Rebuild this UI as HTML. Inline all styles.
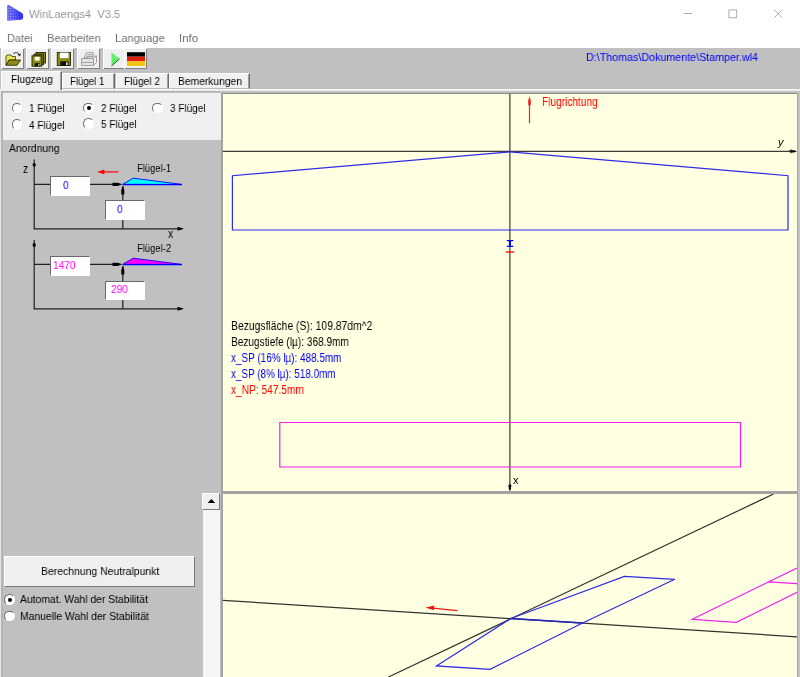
<!DOCTYPE html>
<html lang="de">
<head>
<meta charset="utf-8">
<title>WinLaengs4 V3.5</title>
<style>
html,body{margin:0;padding:0;}
body{width:800px;height:677px;overflow:hidden;background:#c0c0c0;position:relative;font-family:"Liberation Sans",sans-serif;font-size:12px;color:#000;}
.abs{position:absolute;}
.t{position:absolute;white-space:nowrap;line-height:14px;font-size:12.2px;transform-origin:0 0;will-change:transform;}
#titlebar{left:0;top:0;width:800px;height:30px;background:#fff;}
#menubar{left:0;top:30px;width:800px;height:18px;background:#fff;}
.title{color:#969696;font-size:11.5px;}
.u{font-size:11.5px;}
.menu{color:#707070;font-size:11.5px;}
.tb{position:absolute;top:48px;height:21px;width:23px;background:#f0f0f0;box-shadow:inset 1px 1px 0 #fff, inset -1px -1px 0 #808080;}
.tab{position:absolute;top:72.6px;height:16.8px;background:#f0f0f0;border-bottom:1px solid #bdbdbd;border-top:1px solid #fff;border-left:1px solid #fff;border-right:1px solid #696969;box-sizing:border-box;box-shadow:inset -1px 0 0 #a0a0a0;}
.tab.sel{top:70.5px;height:19.5px;z-index:2;border-bottom:none;}
.inp{position:absolute;background:#fff;height:19.5px;width:39.6px;box-sizing:border-box;border:1.5px solid;border-color:#696969 #fff #fff #696969;}
.radio{position:absolute;width:10.6px;height:10.6px;border-radius:50%;background:#fff;box-sizing:border-box;border:1.3px solid;border-color:#6c6c6c #fff #fff #6c6c6c;transform:rotate(0deg);}
.radio.on::after{content:"";position:absolute;left:2.6px;top:2.5px;width:4px;height:4px;background:#000;border-radius:50%;}
</style>
</head>
<body>
<!-- title bar -->
<div id="titlebar" class="abs"></div>
<div id="menubar" class="abs"></div>
<svg class="abs" style="left:0;top:0" width="30" height="26" viewBox="0 0 30 26">
  <defs><clipPath id="wc"><path d="M7.300 5.300L8.800 5L22.300 13.300Q23.100 14 23.100 15V18Q23 19.500 21 19.800L7.300 20.800Z"/></clipPath>
  <linearGradient id="lite" x1="0" x2="1" y1="0" y2="0"><stop offset="0" stop-color="#fff" stop-opacity="0.15"/><stop offset="0.800" stop-color="#fff" stop-opacity="0"/></linearGradient></defs>
  <path d="M7.300 5.300L8.800 5L22.300 13.300Q23.100 14 23.100 15V18Q23 19.500 21 19.800L7.300 20.800Z" fill="#3434f2"/>
  <path d="M7.300 5.300L8.800 5L22.300 13.300Q23.100 14 23.100 15V18Q23 19.500 21 19.800L7.300 20.800Z" fill="url(#lite)"/>
  <g clip-path="url(#wc)" fill="#fff"><rect x="8.5" y="6.5" width="0.800" height="0.800" fill-opacity="0.80"/><rect x="8.5" y="8.1" width="0.800" height="0.800" fill-opacity="0.80"/><rect x="8.5" y="9.7" width="0.800" height="0.800" fill-opacity="0.80"/><rect x="8.5" y="11.3" width="0.800" height="0.800" fill-opacity="0.80"/><rect x="8.5" y="12.9" width="0.800" height="0.800" fill-opacity="0.80"/><rect x="8.5" y="14.5" width="0.800" height="0.800" fill-opacity="0.80"/><rect x="8.5" y="16.1" width="0.800" height="0.800" fill-opacity="0.80"/><rect x="8.5" y="17.7" width="0.800" height="0.800" fill-opacity="0.80"/><rect x="8.5" y="19.3" width="0.800" height="0.800" fill-opacity="0.80"/><rect x="10.1" y="6.5" width="0.800" height="0.800" fill-opacity="0.70"/><rect x="10.1" y="8.1" width="0.800" height="0.800" fill-opacity="0.70"/><rect x="10.1" y="9.7" width="0.800" height="0.800" fill-opacity="0.70"/><rect x="10.1" y="11.3" width="0.800" height="0.800" fill-opacity="0.70"/><rect x="10.1" y="12.9" width="0.800" height="0.800" fill-opacity="0.70"/><rect x="10.1" y="14.5" width="0.800" height="0.800" fill-opacity="0.70"/><rect x="10.1" y="16.1" width="0.800" height="0.800" fill-opacity="0.70"/><rect x="10.1" y="17.7" width="0.800" height="0.800" fill-opacity="0.70"/><rect x="10.1" y="19.3" width="0.800" height="0.800" fill-opacity="0.70"/><rect x="11.7" y="6.5" width="0.800" height="0.800" fill-opacity="0.60"/><rect x="11.7" y="8.1" width="0.800" height="0.800" fill-opacity="0.60"/><rect x="11.7" y="9.7" width="0.800" height="0.800" fill-opacity="0.60"/><rect x="11.7" y="11.3" width="0.800" height="0.800" fill-opacity="0.60"/><rect x="11.7" y="12.9" width="0.800" height="0.800" fill-opacity="0.60"/><rect x="11.7" y="14.5" width="0.800" height="0.800" fill-opacity="0.60"/><rect x="11.7" y="16.1" width="0.800" height="0.800" fill-opacity="0.60"/><rect x="11.7" y="17.7" width="0.800" height="0.800" fill-opacity="0.60"/><rect x="11.7" y="19.3" width="0.800" height="0.800" fill-opacity="0.60"/><rect x="13.3" y="6.5" width="0.800" height="0.800" fill-opacity="0.50"/><rect x="13.3" y="8.1" width="0.800" height="0.800" fill-opacity="0.50"/><rect x="13.3" y="9.7" width="0.800" height="0.800" fill-opacity="0.50"/><rect x="13.3" y="11.3" width="0.800" height="0.800" fill-opacity="0.50"/><rect x="13.3" y="12.9" width="0.800" height="0.800" fill-opacity="0.50"/><rect x="13.3" y="14.5" width="0.800" height="0.800" fill-opacity="0.50"/><rect x="13.3" y="16.1" width="0.800" height="0.800" fill-opacity="0.50"/><rect x="13.3" y="17.7" width="0.800" height="0.800" fill-opacity="0.50"/><rect x="13.3" y="19.3" width="0.800" height="0.800" fill-opacity="0.50"/><rect x="14.9" y="6.5" width="0.800" height="0.800" fill-opacity="0.40"/><rect x="14.9" y="8.1" width="0.800" height="0.800" fill-opacity="0.40"/><rect x="14.9" y="9.7" width="0.800" height="0.800" fill-opacity="0.40"/><rect x="14.9" y="11.3" width="0.800" height="0.800" fill-opacity="0.40"/><rect x="14.9" y="12.9" width="0.800" height="0.800" fill-opacity="0.40"/><rect x="14.9" y="14.5" width="0.800" height="0.800" fill-opacity="0.40"/><rect x="14.9" y="16.1" width="0.800" height="0.800" fill-opacity="0.40"/><rect x="14.9" y="17.7" width="0.800" height="0.800" fill-opacity="0.40"/><rect x="14.9" y="19.3" width="0.800" height="0.800" fill-opacity="0.40"/><rect x="16.5" y="6.5" width="0.800" height="0.800" fill-opacity="0.30"/><rect x="16.5" y="8.1" width="0.800" height="0.800" fill-opacity="0.30"/><rect x="16.5" y="9.7" width="0.800" height="0.800" fill-opacity="0.30"/><rect x="16.5" y="11.3" width="0.800" height="0.800" fill-opacity="0.30"/><rect x="16.5" y="12.9" width="0.800" height="0.800" fill-opacity="0.30"/><rect x="16.5" y="14.5" width="0.800" height="0.800" fill-opacity="0.30"/><rect x="16.5" y="16.1" width="0.800" height="0.800" fill-opacity="0.30"/><rect x="16.5" y="17.7" width="0.800" height="0.800" fill-opacity="0.30"/><rect x="16.5" y="19.3" width="0.800" height="0.800" fill-opacity="0.30"/><rect x="18.1" y="6.5" width="0.800" height="0.800" fill-opacity="0.20"/><rect x="18.1" y="8.1" width="0.800" height="0.800" fill-opacity="0.20"/><rect x="18.1" y="9.7" width="0.800" height="0.800" fill-opacity="0.20"/><rect x="18.1" y="11.3" width="0.800" height="0.800" fill-opacity="0.20"/><rect x="18.1" y="12.9" width="0.800" height="0.800" fill-opacity="0.20"/><rect x="18.1" y="14.5" width="0.800" height="0.800" fill-opacity="0.20"/><rect x="18.1" y="16.1" width="0.800" height="0.800" fill-opacity="0.20"/><rect x="18.1" y="17.7" width="0.800" height="0.800" fill-opacity="0.20"/><rect x="18.1" y="19.3" width="0.800" height="0.800" fill-opacity="0.20"/><rect x="19.7" y="6.5" width="0.800" height="0.800" fill-opacity="0.10"/><rect x="19.7" y="8.1" width="0.800" height="0.800" fill-opacity="0.10"/><rect x="19.7" y="9.7" width="0.800" height="0.800" fill-opacity="0.10"/><rect x="19.7" y="11.3" width="0.800" height="0.800" fill-opacity="0.10"/><rect x="19.7" y="12.9" width="0.800" height="0.800" fill-opacity="0.10"/><rect x="19.7" y="14.5" width="0.800" height="0.800" fill-opacity="0.10"/><rect x="19.7" y="16.1" width="0.800" height="0.800" fill-opacity="0.10"/><rect x="19.7" y="17.7" width="0.800" height="0.800" fill-opacity="0.10"/><rect x="19.7" y="19.3" width="0.800" height="0.800" fill-opacity="0.10"/></g>
</svg>
<div class="t title" style="left:29.4px;top:6.8px;transform:scaleX(.971)">WinLaengs4&nbsp; V3.5</div>
<svg class="abs" style="left:670px;top:0" width="130" height="30" viewBox="670 0 130 30">
  <g stroke="#a4a4a4" stroke-width="0.9" fill="none">
    <path d="M683.600 13.500H692"/>
    <rect x="728.900" y="9.900" width="7.800" height="7.800"/>
    <path d="M774.200 9.700L782.200 17.800M782.200 9.700L774.200 17.800"/>
  </g>
</svg>
<div class="t menu" style="left:6.5px;top:30.8px;transform:scaleX(.948)">Datei</div>
<div class="t menu" style="left:46.7px;top:30.8px;transform:scaleX(.968)">Bearbeiten</div>
<div class="t menu" style="left:115px;top:30.8px;transform:scaleX(.973)">Language</div>
<div class="t menu" style="left:179.3px;top:30.8px;">Info</div>

<!-- toolbar -->
<div class="tb" style="left:1px"></div>
<div class="tb" style="left:26px"></div>
<div class="tb" style="left:51px"></div>
<div class="tb" style="left:76.500px"></div>
<div class="tb" style="left:102.500px;width:21px;box-shadow:inset 1px 1px 0 #fff, inset 0 -1px 0 #808080"></div>
<div class="tb" style="left:123.500px;width:23.500px"></div>
<svg class="abs" style="left:0;top:48px" width="150" height="22" viewBox="0 48 150 22">
  <!-- open folder -->
  <g>
    <path d="M6 65V56L7 55H11L12 56.500H15.500V60H9Z" fill="#e6e650" stroke="#303000" stroke-width="0.8"/>
    <path d="M6 65.300L9.300 60H20.700L17 65.300Z" fill="#8c8c10" stroke="#202000" stroke-width="0.8"/>
    <path d="M13.200 54C15 51.800 18.300 52 19.500 55.200" fill="none" stroke="#202020" stroke-width="1"/>
    <path d="M17.500 54.500L20 56.500L20.800 53.500Z" fill="#202020"/>
  </g>
  <!-- save all -->
  <g stroke="#202000" stroke-width="0.9">
    <rect x="36" y="52.500" width="9.500" height="10.500" fill="#8c8c10"/>
    <rect x="34" y="54.200" width="9.500" height="10.500" fill="#8c8c10"/>
    <rect x="32" y="55.800" width="9.800" height="10.400" fill="#8c8c10"/>
  </g>
  <rect x="34.800" y="56.800" width="4.800" height="3.800" fill="#fff"/>
  <rect x="34.800" y="63.200" width="5.200" height="3.200" fill="#101010"/>
  <rect x="38.300" y="63.800" width="1.200" height="2.200" fill="#d0d0d0"/>
  <!-- save -->
  <rect x="57.300" y="52.500" width="13.200" height="13" fill="#8c8c10" stroke="#202000" stroke-width="0.9"/>
  <rect x="60" y="52.600" width="8.500" height="5.500" fill="#fff"/>
  <rect x="60.300" y="61.300" width="8.200" height="4.300" fill="#101010"/>
  <rect x="66" y="62.300" width="1.600" height="2.800" fill="#e0e0e0"/>
  <!-- print disabled -->
  <g fill="none" stroke="#a0a0a0" stroke-width="1">
    <path d="M84 58L86.500 52.700H93.500L92 58" fill="#f4f4f4"/>
    <path d="M87 54.700H92M86.300 56.300H91.300"/>
    <path d="M81.500 58.500H93.500V65.500H81.500Z" fill="#e4e4e4"/>
    <path d="M93.500 58.500L96.500 56V62.500L93.500 65.500"/>
    <path d="M84 58L93 56.300L96.500 56"/>
    <path d="M82 62.500H93"/>
  </g>
  <!-- play -->
  <path d="M111.500 52.200L119.600 58.800L111.500 66Z" fill="#66f070"/>
  <path d="M111.500 66L119.600 58.800" stroke="#2a5a2a" stroke-width="1" fill="none"/>
  <!-- flag -->
  <rect x="127" y="52.200" width="18" height="4.500" fill="#000"/>
  <rect x="127" y="56.700" width="18" height="4.500" fill="#e0200c"/>
  <rect x="127" y="61.200" width="18" height="4.800" fill="#f2c414"/>
</svg>
<div class="t u" style="left:585.7px;top:50px;color:#0000ff;transform:scaleX(0.931)">D:\Thomas\Dokumente\Stamper.wl4</div>

<!-- tabs -->
<div class="abs" style="left:0;top:89px;width:800px;height:2.4px;background:#ececec;border-top:0.8px solid #f6f6f6;box-sizing:border-box"></div>
<div class="abs" style="left:0;top:91.300px;width:221px;height:1.200px;background:#b4b4b4"></div>
<div class="tab sel" style="left:1px;width:61px"></div>
<div class="tab" style="left:62px;width:53px"></div>
<div class="tab" style="left:115.500px;width:53px"></div>
<div class="tab" style="left:169px;width:81px"></div>
<div class="t u" style="left:10.6px;top:72px;z-index:3;transform:scaleX(0.882)">Flugzeug</div>
<div class="t u" style="left:70.2px;top:74.2px;z-index:3;transform:scaleX(0.84)">Flügel 1</div>
<div class="t u" style="left:123.6px;top:74.2px;z-index:3;transform:scaleX(0.88)">Flügel 2</div>
<div class="t u" style="left:177.6px;top:74.2px;z-index:3;transform:scaleX(0.894)">Bemerkungen</div>

<!-- left panel -->
<div class="abs" style="left:0;top:91px;width:1.2px;height:586px;background:#e6e6e6"></div>
<div class="abs" style="left:1.2px;top:91.300px;width:1.600px;height:586px;background:#b4b4b4"></div>
<div class="abs" style="left:2.800px;top:92.500px;width:218.200px;height:47.300px;background:#f0f0f0"></div>
<div class="radio" style="left:11.9px;top:102.9px"></div>
<div class="radio on" style="left:83.1px;top:102.9px"></div>
<div class="radio" style="left:152.4px;top:102.9px"></div>
<div class="radio" style="left:11.9px;top:119.3px"></div>
<div class="radio" style="left:83.1px;top:118.2px"></div>
<div class="t u" style="left:29.4px;top:101.2px;transform:scaleX(0.868)">1 Flügel</div>
<div class="t u" style="left:100.6px;top:101px;transform:scaleX(0.868)">2 Flügel</div>
<div class="t u" style="left:170px;top:101px;transform:scaleX(0.868)">3 Flügel</div>
<div class="t u" style="left:29.4px;top:118px;transform:scaleX(0.868)">4 Flügel</div>
<div class="t u" style="left:100.6px;top:117.2px;transform:scaleX(0.868)">5 Flügel</div>
<div class="t u" style="left:9.3px;top:141.4px;transform:scaleX(0.9)">Anordnung</div>

<svg class="abs" style="left:0;top:140px" width="221" height="180" viewBox="0 140 221 180">
  <g stroke="#202020" stroke-width="1.2" fill="none">
    <path d="M34.200 159.500V228.800H182"/>
    <path d="M34.200 184.300H51M90 184.300H120"/>
    <path d="M122.800 186V200M122.800 219V228.800"/>
    <path d="M34.200 240V308.800H182"/>
    <path d="M34.200 264.300H51M90 264.300H120"/>
    <path d="M122.800 266V281M122.800 299V308.800"/>
  </g>
  <g fill="#000">
    <ellipse cx="34.200" cy="164.800" rx="1.600" ry="1.900"/><ellipse cx="34.200" cy="245" rx="1.600" ry="1.900"/>
    <path d="M177.500 226.800L184 228.800L177.500 230.800Z"/><path d="M177.500 306.800L184 308.800L177.500 310.800Z"/>
    <path d="M112.500 182.700H117.500L122.500 184.300L117.500 185.900H112.500Z"/><path d="M112.500 262.700H117.500L122.500 264.300L117.500 265.900H112.500Z"/>
    <path d="M121.300 194.400V190L122.800 185.500L124.300 190V194.400Z"/><path d="M121.300 274.400V270L122.800 265.500L124.300 270V274.400Z"/>
  </g>
  <path d="M122.800 184.300L133.200 178.200L181.900 184.400Z" fill="#00ffff" stroke="#0000ff" stroke-width="0.9"/>
  <path d="M122.800 184.600H181.900" stroke="#0000ff" stroke-width="1.2"/>
  <path d="M122.800 264.300L133.200 258.200L181.900 264.400Z" fill="#ff00ff" stroke="#0000ff" stroke-width="0.9"/>
  <path d="M122.800 264.600H181.900" stroke="#0000ff" stroke-width="1.200"/>
  <path d="M100 171.900H118.500" stroke="#ff0000" stroke-width="1.2"/><path d="M96.900 171.900L104.400 169.600V174.200Z" fill="#ff0000"/>
</svg>
<div class="t" style="left:22.8px;top:161.6px;font-size:12.7px;transform:scaleX(.8)">z</div>
<div class="t" style="left:168px;top:226.800px;font-size:12.2px;transform:scaleX(.85)">x</div>
<div class="t u" style="left:137px;top:160.9px;transform:scaleX(0.82)">Flügel-1</div>
<div class="t u" style="left:137px;top:240.9px;transform:scaleX(0.82)">Flügel-2</div>
<div class="inp" style="left:50.4px;top:176px"></div>
<div class="inp" style="left:105px;top:200px"></div>
<div class="inp" style="left:50.4px;top:256px"></div>
<div class="inp" style="left:105px;top:280.500px"></div>
<div class="t u" style="left:62.6px;top:177.6px;color:#0000ff;transform:scaleX(.875)">0</div>
<div class="t u" style="left:117px;top:201.8px;color:#0000ff;transform:scaleX(.875)">0</div>
<div class="t u" style="left:52.7px;top:257.6px;color:#ff00ff;transform:scaleX(.875)">1470</div>
<div class="t u" style="left:111.4px;top:282.3px;color:#ff00ff;transform:scaleX(.875)">290</div>

<!-- button -->
<div class="abs" style="left:3.800px;top:555.500px;width:190.800px;height:31.500px;background:#efefef;box-sizing:border-box;border:1.200px solid;border-color:#fff #7a7a7a #7a7a7a #fff;"></div>
<div class="t u" style="left:41.2px;top:564px;transform:scaleX(0.907)">Berechnung Neutralpunkt</div>
<div class="radio on" style="left:4.2px;top:594.2px"></div>
<div class="radio" style="left:4.2px;top:610.9px"></div>
<div class="t u" style="left:20px;top:592.3px;transform:scaleX(0.9)">Automat. Wahl der Stabilität</div>
<div class="t u" style="left:20px;top:608.6px;transform:scaleX(0.903)">Manuelle Wahl der Stabilität</div>

<!-- scrollbar -->
<div class="abs" style="left:202.500px;top:492.500px;width:17.200px;height:185px;background:#f6f6f6"></div>
<div class="abs" style="left:202.300px;top:492.500px;width:17.500px;height:17px;background:#f0f0f0;box-sizing:border-box;border:1.200px solid;border-color:#fff #7c7c7c #7c7c7c #fff"></div>
<svg class="abs" style="left:202px;top:492px" width="18" height="18" viewBox="202 492 18 18"><path d="M207.600 503L211.400 498.900L215.200 503Z" fill="#000"/></svg>

<!-- right panel -->
<div class="abs" style="left:221px;top:92.500px;width:579px;height:584.500px;background:#a4a4a2"></div>
<div class="abs" style="left:798px;top:91.300px;width:2px;height:586px;background:#c4c4c8"></div>
<div class="abs" style="left:221px;top:92.500px;width:576px;height:1.500px;background:#8a8a82"></div>
<div class="abs" style="left:221.200px;top:92.500px;width:1.600px;height:399px;background:#a2a298"></div>
<div class="abs" style="left:222.800px;top:94px;width:574px;height:397.300px;background:#ffffe1"></div>
<div class="abs" style="left:222.800px;top:494px;width:574px;height:183px;background:#ffffe1"></div>
<svg class="abs" style="left:222px;top:93px" width="576" height="399" viewBox="222 93 576 399">
  <g fill="none" stroke-width="1.2">
    <path d="M222.800 151.300H796" stroke="#3c3c36"/>
    <path d="M509.900 94V490" stroke="#3c3c36"/>
    <path d="M788.500 151.300L792 149.600M788.500 151.300L792 153" stroke="#3c3c36" stroke-width="0.8"/>
    <path d="M790.500 150.200H794L796.800 151.300L794 152.400H790.500Z" fill="#000" stroke="none"/>
    <path d="M509.900 483.500L508 486.500M509.900 483.500L511.800 486.500" stroke="#3c3c36" stroke-width="0.8"/>
    <path d="M508.800 485V488.500L509.900 491.300L511 488.500V485Z" fill="#000" stroke="none"/>
    <path d="M509.900 151.800L788 175.700V230H232.400V175.700Z" stroke="#2c2ce6"/>
    <path d="M279.800 422.500H740.500V467H279.800Z" stroke="#f020f0"/>
    <path d="M529.500 98V123.300" stroke="#f02020"/><path d="M528.200 105.300V101L529.500 96.200L530.800 101V105.300Z" fill="#f02020"/>
    <path d="M506.800 240.600H513.300M506.800 246.400H513.300" stroke="#0000ff" stroke-width="1.4"/><path d="M509.900 240V247" stroke="#0000ff" stroke-width="2"/>
    <path d="M505.700 252H514.200" stroke="#f01010" stroke-width="1.4"/>
  </g>
</svg>
<div class="t" style="left:541.7px;top:94.5px;color:#ff0000;transform:scaleX(0.830)">Flugrichtung</div>
<div class="t" style="left:778px;top:134.800px;font-style:italic;font-size:11px">y</div>
<div class="t" style="left:513px;top:473px;font-size:11px">x</div>
<div class="t" style="left:231px;top:318.8px;transform:scaleX(0.850);">Bezugsfläche (S): 109.87dm^2</div>
<div class="t" style="left:231px;top:335.1px;transform:scaleX(0.827);">Bezugstiefe (lµ): 368.9mm</div>
<div class="t" style="left:231px;top:351.4px;transform:scaleX(0.815);color:#0000ff">x_SP (16% lµ): 488.5mm</div>
<div class="t" style="left:231px;top:367.1px;transform:scaleX(0.812);color:#0000ff">x_SP (8% lµ): 518.0mm</div>
<div class="t" style="left:231px;top:382.8px;transform:scaleX(0.834);color:#ff0000">x_NP: 547.5mm</div>

<svg class="abs" style="left:222px;top:494px" width="575" height="183" viewBox="222 494 575 183">
  <g fill="none" stroke-width="1.2">
    <path d="M222.800 600.300L797 636.800" stroke="#34342e"/>
    <path d="M773.500 494L388.500 677" stroke="#34342e"/>
    <path d="M510.800 618.500L624.400 576.400L674.800 579.300L582.600 623L490 669.300L436.400 665.900Z" stroke="#2c2ce6"/>
    <path d="M510.800 618.500L582.600 623" stroke="#2020c0" stroke-width="1.4"/>
    <path d="M797 568L692.200 619.300L736.300 622.300L797 592.300M768.100 581.800L797 583.700" stroke="#f020f0"/>
    <path d="M428 607.600L457.400 610.600" stroke="#f01818"/><path d="M425.500 607.400L434.300 605.600L433.900 610.300Z" fill="#f01818"/>
  </g>
</svg>
</body>
</html>
